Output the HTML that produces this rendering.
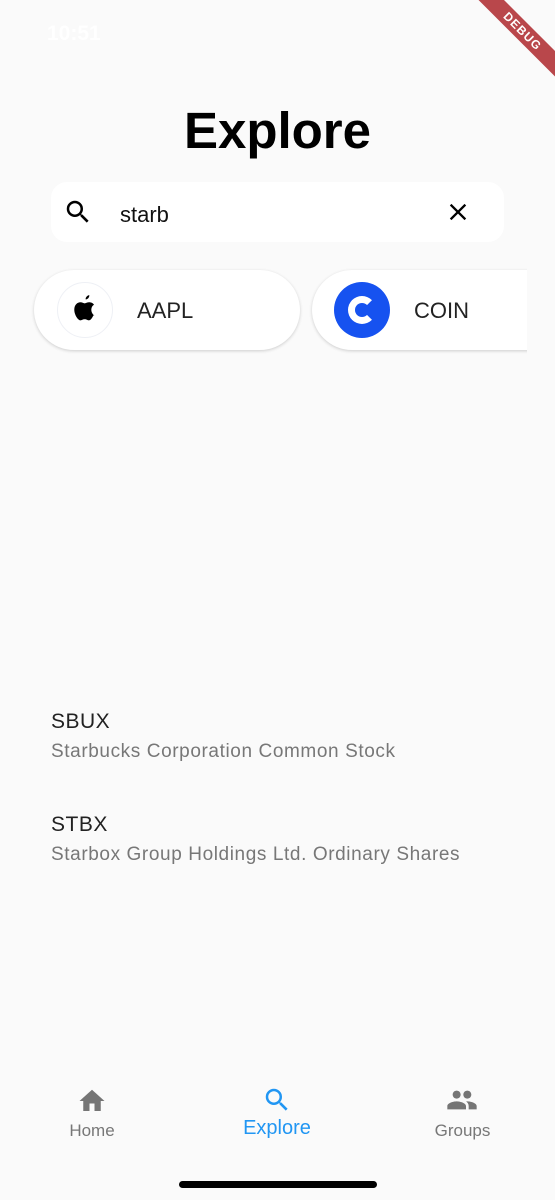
<!DOCTYPE html>
<html><head><meta charset="utf-8"><style>
*{margin:0;padding:0;box-sizing:border-box}
body{width:555px;height:1200px;background:#fafafa;font-family:"Liberation Sans",sans-serif;position:relative;overflow:hidden}
.a{position:absolute}
</style></head><body>
<div class="a" style="left:47px;top:22px;color:#fff;font-size:21px;font-weight:bold">10:51</div>
<div class="a" style="left:490px;top:-14px;width:110px;height:18px;background:#b9474b;transform:rotate(45deg);transform-origin:0 0;color:#fff;font-size:12px;font-weight:bold;text-align:center;line-height:18px;letter-spacing:1px">DEBUG</div>
<div class="a" style="left:0;width:555px;top:101px;text-align:center;font-size:51px;font-weight:bold;color:#000">Explore</div>
<div class="a" style="left:51px;top:182px;width:453px;height:60px;background:#fff;border-radius:16px"></div>
<svg class="a" style="left:63px;top:197px" width="30" height="30" viewBox="0 0 24 24"><path d="M15.5 14h-.79l-.28-.27A6.47 6.47 0 0 0 16 9.5 6.5 6.5 0 1 0 9.5 16c1.61 0 3.09-.59 4.23-1.57l.27.28v.79l5 4.99L20.49 19l-4.99-5zm-6 0C7.01 14 5 11.990 5 9.5S7.01 5 9.5 5 14 7.01 14 9.5 11.99 14 9.5 14z"/></svg>
<div class="a" style="left:120px;top:202px;font-size:22px;color:#111">starb</div>
<svg class="a" style="left:444px;top:198px" width="28" height="28" viewBox="0 0 24 24"><path d="M19 6.41 17.59 5 12 10.59 6.41 5 5 6.41 10.59 12 5 17.59 6.41 19 12 13.41 17.59 19 19 17.59 13.41 12z"/></svg>
<div class="a" style="left:34px;top:270px;width:266px;height:80px;background:#fff;border-radius:40px;box-shadow:0 1px 3px rgba(0,0,0,.18)"></div>
<div class="a" style="left:57px;top:282px;width:56px;height:56px;border-radius:50%;border:1px solid #eef0f5;background:#fff"></div>
<svg class="a" style="left:72px;top:294px" width="26" height="30" viewBox="0 0 24 28"><path d="M16 1c.2 2-1.4 4-3.4 4-.2-1.9 1.5-3.8 3.4-4zM19.8 20c-.9 2-2.3 4.6-4.1 4.6-1.6 0-2-1-4-1s-2.5 1-4 1C5.5 24.6 2 19.5 2 14.6 2 10 5 7.7 7.7 7.7c1.6 0 2.9 1 4 1 1 0 2.6-1.1 4.4-1 .8 0 3 .3 4.3 2.3-3.7 2.2-3 7.9.4 10z"/></svg>
<div class="a" style="left:137px;top:298px;font-size:22px;color:#222">AAPL</div>
<div class="a" style="left:312px;top:270px;width:230px;height:80px;background:#fff;border-radius:40px 0 0 40px;box-shadow:0 1px 3px rgba(0,0,0,.18)"></div>
<div class="a" style="left:527px;top:265px;width:28px;height:90px;background:#fafafa"></div>
<div class="a" style="left:334px;top:282px;width:56px;height:56px;border-radius:50%;background:#1652f0"></div>
<div class="a" style="left:348px;top:296px;width:28px;height:28px;border-radius:50%;border:7px solid #fff;border-right-color:transparent"></div>
<div class="a" style="left:414px;top:298px;font-size:22px;color:#222">COIN</div>
<div class="a" style="left:51px;top:710px;font-size:21px;color:#222;letter-spacing:.5px">SBUX</div>
<div class="a" style="left:51px;top:741px;font-size:19px;color:#777;letter-spacing:.6px">Starbucks Corporation Common Stock</div>
<div class="a" style="left:51px;top:813px;font-size:21px;color:#222;letter-spacing:.5px">STBX</div>
<div class="a" style="left:51px;top:844px;font-size:19px;color:#777;letter-spacing:.6px">Starbox Group Holdings Ltd. Ordinary Shares</div>
<svg class="a" style="left:77px;top:1086px" width="30" height="30" viewBox="0 0 24 24"><path fill="#757575" d="M10 20v-6h4v6h5v-8h3L12 3 2 12h3v8z"/></svg>
<div class="a" style="left:0;width:184px;top:1121px;text-align:center;font-size:17px;color:#777">Home</div>
<svg class="a" style="left:262px;top:1085px" width="30" height="30" viewBox="0 0 24 24"><path fill="#2196f3" d="M15.5 14h-.79l-.28-.27A6.47 6.47 0 0 0 16 9.5 6.5 6.5 0 1 0 9.5 16c1.61 0 3.09-.59 4.23-1.57l.27.28v.79l5 4.99L20.49 19l-4.99-5zm-6 0C7.01 14 5 11.99 5 9.5S7.01 5 9.5 5 14 7.01 14 9.5 11.99 14 9.5 14z"/></svg>
<div class="a" style="left:185px;width:184px;top:1117px;text-align:center;font-size:20px;color:#2196f3">Explore</div>
<svg class="a" style="left:444px;top:1084px" width="36" height="32" viewBox="0 0 24 24"><path fill="#757575" d="M16 11c1.66 0 2.99-1.34 2.99-3S17.66 5 16 5s-3 1.34-3 3 1.34 3 3 3zm-8 0c1.66 0 2.99-1.34 2.99-3S9.66 5 8 5 5 6.34 5 8s1.34 3 3 3zm0 2c-2.33 0-7 1.17-7 3.5V19h14v-2.5c0-2.33-4.67-3.5-7-3.5zm8 0c-.29 0-.62.02-.97.05 1.16.84 1.97 1.970 1.97 3.45V19h6v-2.5c0-2.33-4.67-3.5-7-3.5z"/></svg>
<div class="a" style="left:370px;width:185px;top:1121px;text-align:center;font-size:17px;color:#777">Groups</div>
<div class="a" style="left:179px;top:1181px;width:198px;height:7px;border-radius:4px;background:#000"></div>
</body></html>
